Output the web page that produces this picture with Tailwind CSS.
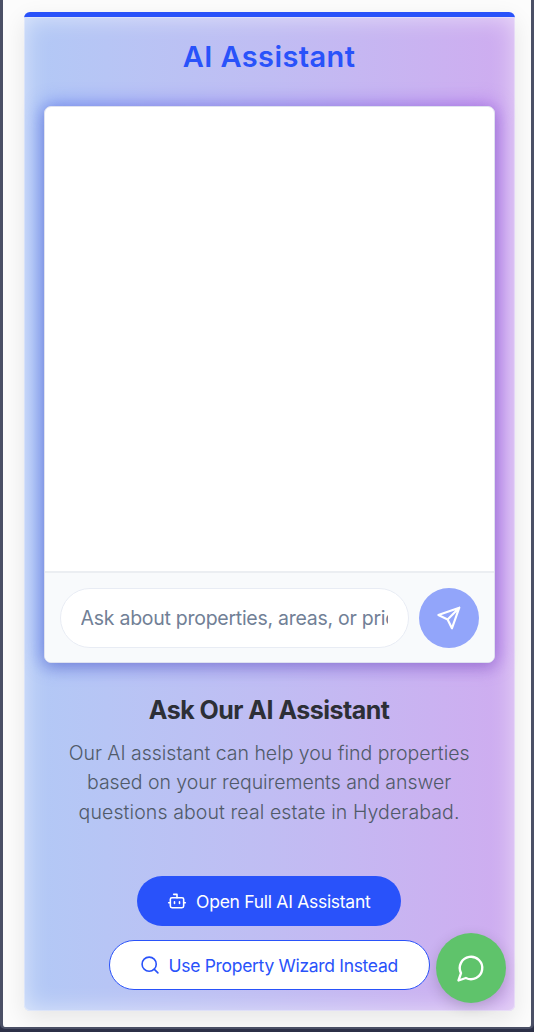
<!DOCTYPE html>
<html lang="en">
<head>
<meta charset="utf-8">
<title>AI Assistant</title>
<script src="https://cdn.jsdelivr.net/npm/@tailwindcss/browser@4"></script>
</head>
<body class="w-[534px] h-[1032px] overflow-hidden bg-[#2c3047] font-['Inter',sans-serif]">
<div class="h-[1029px] rounded-b-[5px] border-x-[3px] border-b-2 border-[#4b5066] bg-[#fcfcfc] pt-3 pl-[20.6px] overflow-hidden">
  <main class="isolate relative w-[491px] h-[998.5px] rounded-[6px] border-t-[5px] border-t-[#2952fa] bg-linear-to-r from-[#b2c9f6] via-[#c0bdf3] to-[#cfacf0] shadow-[0_8px_24px_rgba(0,0,0,0.09)] px-5 flex flex-col items-center">
    <div class="absolute inset-0 -z-20 rounded-b-[6px] shadow-[inset_0_0_24px_rgba(255,255,255,0.6),inset_0_0_0_1px_rgba(235,238,248,0.45)]"></div>
    <h1 class="mt-[22px] h-[36px] leading-[36px] text-[29px] font-semibold tracking-[0.4px] text-[#2952fa] whitespace-nowrap"><span>AI Assistant</span></h1>
    <section class="relative mt-[31px] w-[451px] h-[557px] shrink-0">
      <div class="absolute -inset-[2px] -z-10 rounded-[8px] bg-linear-to-r from-[#4466f0] to-[#9a50e4] opacity-60 blur-[10px]"></div>
      <div class="h-full rounded-[7px] border border-[#dfe2f0] bg-white flex flex-col justify-end overflow-hidden shadow-[0_5px_14px_rgba(40,30,100,0.16)]">
        <div class="h-[91px] border-t-2 border-[#ebeef2] bg-[#f8fafc] flex items-center justify-between px-[15px]">
          <div class="w-[349px] h-[60px] rounded-full border-[1.5px] border-[#e8ecf4] bg-white flex items-center px-5">
            <div class="w-[307px] overflow-hidden whitespace-nowrap text-[19.5px] tracking-[-0.27px] leading-7 text-[#718096]"><span>Ask about properties, areas, or price</span></div>
          </div>
          <button class="w-[60px] h-[60px] rounded-full bg-[#92a5fa] flex items-center justify-center" aria-label="Send">
            <svg width="26" height="26" viewBox="0 0 24 24" fill="none" stroke="#fff" stroke-width="2" stroke-linecap="round" stroke-linejoin="round"><path d="M21.5 2.5 14.7 21.5 10.7 13.3 2.2 9.3ZM21.5 2.5 10.7 13.3"/></svg>
          </button>
        </div>
      </div>
    </section>
    <h2 class="mt-[29px] h-9 leading-9 text-[25px] font-bold tracking-[-0.52px] text-[#2d2f36] whitespace-nowrap"><span>Ask Our AI Assistant</span></h2>
    <div class="mt-[10.5px] text-center text-[19.5px] leading-[29.5px] font-[350] text-[#505a69] whitespace-nowrap">
      <p class="tracking-[-0.02px]"><span>Our AI assistant can help you find properties</span></p>
      <p class="tracking-[-0.05px]"><span>based on your requirements and answer</span></p>
      <p class="tracking-[0.1px]"><span>questions about real estate in Hyderabad.</span></p>
    </div>
    <button class="mt-[49px] w-[264px] h-[50px] shrink-0 rounded-full bg-[#2952fa] text-white text-[17.5px] tracking-[-0.28px] flex items-center pl-[30px] gap-[9px] whitespace-nowrap">
      <svg width="20" height="20" viewBox="0 0 24 24" fill="none" stroke="currentColor" stroke-width="1.9" stroke-linecap="round" stroke-linejoin="round"><path d="M12 8V4H8"/><rect width="16" height="12" x="4" y="8" rx="2"/><path d="M2 14h2M20 14h2M15 13v2M9 13v2"/></svg>
      <span class="pt-[2px]">Open Full AI Assistant</span>
    </button>
    <button class="mt-[14px] w-[321px] h-[50px] shrink-0 rounded-full border-[1.5px] border-[#2952fa] bg-white text-[#2952fa] text-[17.5px] tracking-[-0.31px] flex items-center pl-[30px] gap-[9px] whitespace-nowrap">
      <svg width="20" height="20" viewBox="0 0 24 24" fill="none" stroke="currentColor" stroke-width="1.9" stroke-linecap="round" stroke-linejoin="round"><circle cx="11" cy="11" r="8.5"/><path d="m21.5 21.5-4.3-4.3"/></svg>
      <span class="pt-[2px]">Use Property Wizard Instead</span>
    </button>
  </main>
</div>
<button class="fixed left-[436px] top-[932.5px] w-[70px] h-[70px] rounded-full bg-[#5fc36b] shadow-[0_4px_14px_rgba(0,0,0,0.16)] flex items-center justify-center" aria-label="Chat">
  <svg width="30" height="30" viewBox="0 0 24 24" fill="none" stroke="#fff" stroke-width="1.9" stroke-linecap="round" stroke-linejoin="round"><path d="M7.9 20A9 9 0 1 0 4 16.1L2 22Z"/></svg>
</button>
</body>
</html>
